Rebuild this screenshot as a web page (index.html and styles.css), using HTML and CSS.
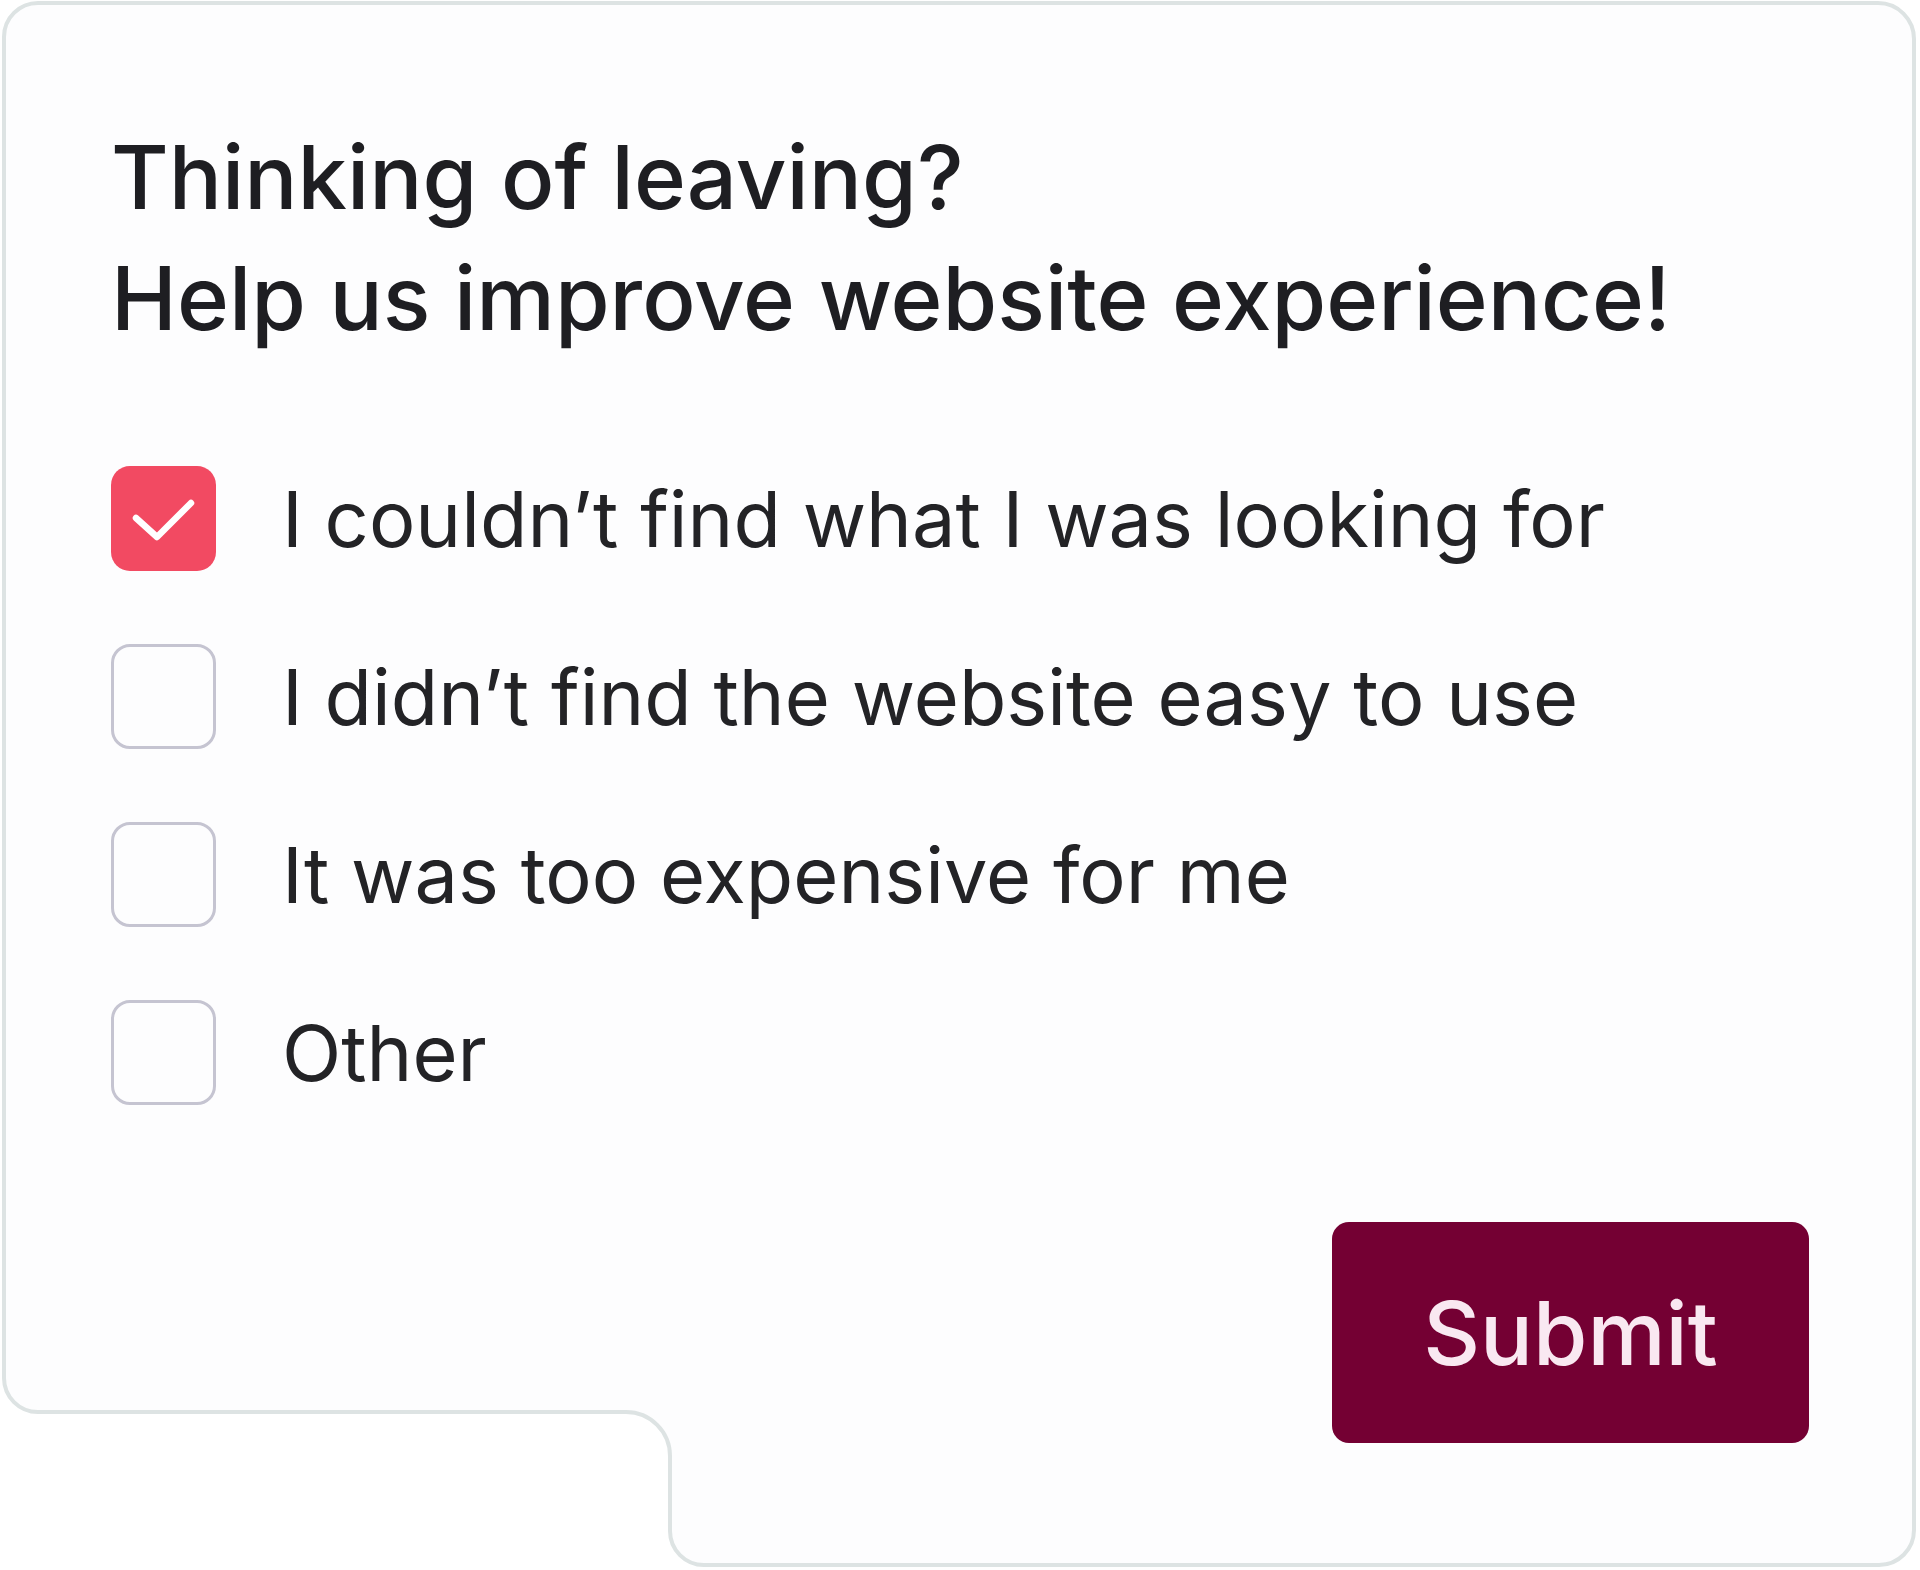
FILE: index.html
```html
<!DOCTYPE html>
<html lang="en">
<head>
<meta charset="utf-8">
<title>Exit survey</title>
<link rel="stylesheet" href="styles.css">
</head>
<body>
<div class="card">
  <svg class="card-shape" width="1920" height="1570" viewBox="0 0 1920 1570" aria-hidden="true">
    <path d="M4 37 A34 34 0 0 1 38 3 L1878 3 A36 36 0 0 1 1914 39 L1914 1530 A35 35 0 0 1 1879 1565 L704 1565 A34 34 0 0 1 670 1531 L670 1456 A44 44 0 0 0 626 1412 L38 1412 A34 34 0 0 1 4 1378 Z" fill="#fdfdfe" stroke="#dde3e3" stroke-width="4"/>
  </svg>
  <div class="content">
    <h1 class="title">Thinking of leaving?<br>Help us improve website experience!</h1>
    <ul class="options">
      <li class="option">
        <span class="box box-checked">
          <svg width="104" height="104" viewBox="0 0 104 104"><path d="M24 51 L45 70 L79 36" fill="none" stroke="#ffffff" stroke-width="6.5" stroke-linecap="round" stroke-linejoin="round"/></svg>
        </span>
        <span class="label">I couldn’t find what I was looking for</span>
      </li>
      <li class="option">
        <span class="box"></span>
        <span class="label">I didn’t find the website easy to use</span>
      </li>
      <li class="option">
        <span class="box"></span>
        <span class="label">It was too expensive for me</span>
      </li>
      <li class="option">
        <span class="box"></span>
        <span class="label">Other</span>
      </li>
    </ul>
    <div class="actions">
      <button class="submit" type="button">Submit</button>
    </div>
  </div>
</div>
</body>
</html>
```
FILE: styles.css
```css
* { box-sizing: border-box; }
html, body {
  margin: 0;
  padding: 0;
  background: #ffffff;
}
body {
  font-family: Inter, "Noto Sans", "Liberation Sans", sans-serif;
  color: #212124;
}
.card {
  position: relative;
  width: 1920px;
  height: 1570px;
}
.card-shape {
  position: absolute;
  left: 0;
  top: 0;
  z-index: 0;
}
.content {
  position: relative;
  z-index: 1;
  display: flex;
  flex-direction: column;
  padding: 116px 111px 0 111px;
}
.title {
  margin: 0;
  font-size: 88.5px;
  line-height: 121px;
  font-weight: 500;
  color: #1e1e22;
}
.options {
  list-style: none;
  margin: 108px 0 0 0;
  padding: 0;
  display: flex;
  flex-direction: column;
  gap: 73px;
}
.option {
  display: flex;
  align-items: center;
  gap: 66px;
  height: 105px;
}
.box {
  flex: 0 0 auto;
  width: 105px;
  height: 105px;
  border: 3.5px solid #c5c4d1;
  border-radius: 19px;
  background: #fdfdfe;
  display: flex;
  align-items: center;
  justify-content: center;
}
.box-checked {
  border: none;
  background: #f24a62;
}
.box-checked svg { display: block; }
.label {
  font-size: 77.5px;
  line-height: 78px;
  font-weight: 400;
  color: #232326;
  white-space: nowrap;
}
.actions {
  display: flex;
  justify-content: flex-end;
  margin-top: 117px;
}
.submit {
  width: 477px;
  height: 221px;
  border: none;
  border-radius: 17px;
  background: #740033;
  color: #f9e8f1;
  font-family: Inter, "Noto Sans", "Liberation Sans", sans-serif;
  font-size: 88px;
  font-weight: 500;
  line-height: 1;
  padding: 0;
}
```
